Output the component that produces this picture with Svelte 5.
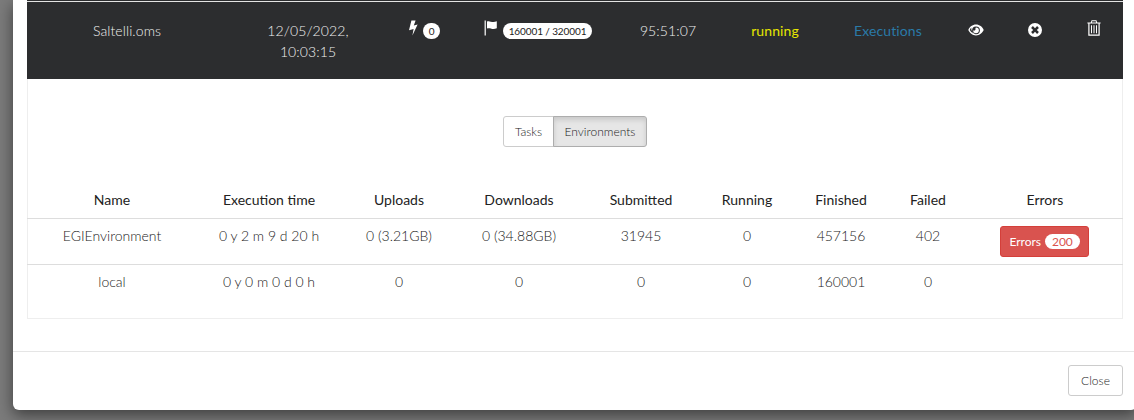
<script>
  const envHeaders = ["Name", "Execution time", "Uploads", "Downloads", "Submitted", "Running", "Finished", "Failed", "Errors"];
  const envRows = [
    { name: "EGIEnvironment", time: "0 y 2 m 9 d 20 h", up: "0 (3.21GB)", down: "0 (34.88GB)", submitted: "31945", running: "0", finished: "457156", failed: "402", errors: 200 },
    { name: "local", time: "0 y 0 m 0 d 0 h", up: "0", down: "0", submitted: "0", running: "0", finished: "160001", failed: "0", errors: 0 }
  ];
</script>

<div class="modal">
  <div class="top-edge"></div>
  <div class="panel">
    <div class="exec-row">
      <div class="cell name">Saltelli.oms</div>
      <div class="cell">12/05/2022,<br />10:03:15</div>
      <div class="cell inline">
        <svg class="bolt" viewBox="0 0 10 16"><path d="M9.6 4.6 4.4 15.6 5.6 9 1 10.2 3.4 0.6 7.6 0.6 5.8 5.6Z" /></svg>
        <span class="badge">0</span>
      </div>
      <div class="cell inline">
        <svg class="flag" viewBox="0 0 14 16"><path d="M0.6 0.5H1.8V15.5H0.6ZM3 1.6C5.5 0 8 3.4 12.8 1.2V8.2C8 10.2 5.5 7 3 8.6Z" /></svg>
        <span class="badge">160001 / 320001</span>
      </div>
      <div class="cell">95:51:07</div>
      <div class="cell running">running</div>
      <div class="cell link">Executions</div>
      <div class="cell icon">
        <svg viewBox="0 0 16 12" width="16" height="12"><path fill-rule="evenodd" d="M8 0.6C11.6 0.6 14.4 3 15.7 6 14.4 9 11.6 11.4 8 11.4 4.4 11.4 1.6 9 0.3 6 1.6 3 4.4 0.6 8 0.6ZM8 2.4A3.9 3.9 0 1 0 8 10.2 3.9 3.9 0 1 0 8 2.4ZM3.2 3.6C2.6 4.3 2.1 5.1 1.8 6 3 8.2 5 9.8 7.2 10.2 4.8 9.2 3 6.6 3.2 3.6ZM8 3.4A2.9 2.9 0 1 1 5.1 6.3C5.9 7 7.6 6.6 7.5 4.9 7.4 4.2 7.4 3.8 8 3.4Z" /></svg>
      </div>
      <div class="cell icon">
        <svg viewBox="0 0 14 14" width="14" height="14"><path fill-rule="evenodd" d="M7 0A7 7 0 1 1 7 14 7 7 0 1 1 7 0ZM4.9 3.1 3.1 4.9 5.2 7 3.1 9.1 4.9 10.9 7 8.8 9.1 10.9 10.9 9.1 8.8 7 10.9 4.9 9.1 3.1 7 5.2Z" /></svg>
      </div>
      <div class="cell icon trash">
        <svg viewBox="0 0 14 16" width="14" height="16"><path fill-rule="evenodd" d="M4.6 0.3H9.4L10.2 2.4H13.6V3.6H12.7V15.7H1.3V3.6H0.4V2.4H3.8ZM5.2 1.2 4.9 2.4H9.1L8.8 1.2ZM2.5 3.6V14.6H11.5V3.6ZM4 5.2H5V13.2H4ZM6.5 5.2H7.5V13.2H6.5ZM9 5.2H10V13.2H9Z" /></svg>
      </div>
    </div>

    <div class="toggle">
      <button class="btn first">Tasks</button>
      <button class="btn last active">Environments</button>
    </div>

    <table>
      <colgroup>
        <col style="width:170px" /><col style="width:144px" /><col style="width:116px" />
        <col style="width:124px" /><col style="width:120px" /><col style="width:92px" />
        <col style="width:96px" /><col style="width:78px" /><col style="width:156px" />
      </colgroup>
      <thead>
        <tr>
          {#each envHeaders as h}
            <th>{h}</th>
          {/each}
        </tr>
      </thead>
      <tbody>
        {#each envRows as r}
          <tr>
            <td>{r.name}</td>
            <td>{r.time}</td>
            <td>{r.up}</td>
            <td>{r.down}</td>
            <td>{r.submitted}</td>
            <td>{r.running}</td>
            <td>{r.finished}</td>
            <td>{r.failed}</td>
            <td>
              {#if r.errors}
                <button class="btn danger">Errors <span class="badge red">{r.errors}</span></button>
              {/if}
            </td>
          </tr>
        {/each}
      </tbody>
    </table>
  </div>

  <div class="footer">
    <button class="btn close">Close</button>
  </div>
</div>

<style>
  :global(body) {
    margin: 0;
    height: 420px;
    overflow: hidden;
    background: #7b7b7b;
    font-family: "Lato", "Open Sans", sans-serif;
    font-weight: 300;
  }

  .modal {
    width: 1124px;
    height: 410px;
    margin-left: 13px;
    background: #fff;
    border-radius: 0 0 6px 6px;
    box-shadow: 0 5px 15px rgba(0, 0, 0, 0.5);
    padding: 0 14px;
    box-sizing: border-box;
  }

  .top-edge {
    height: 1px;
    background: #2c2d2f;
    border-bottom: 1px solid #e4e4e4;
  }

  .panel {
    height: 317px;
    box-sizing: border-box;
    border: 1px solid #eee;
    border-top: 0;
  }

  .exec-row {
    display: grid;
    grid-template-columns: 213px 136px 98px 128px 132px 82px 144px 32px 86px 32px 13px;
    height: 77px;
    margin: 0 -1px;
    padding-top: 18px;
    box-sizing: border-box;
    background: #2c2d2f;
    color: #f0f0f0;
    font-size: 14px;
    line-height: 21px;
    text-align: center;
    letter-spacing: 0.1px;
  }

  .cell.name {
    padding-right: 13px;
  }

  .inline {
    display: flex;
    justify-content: center;
    align-items: center;
    gap: 5px;
    height: 21px;
  }

  .bolt {
    width: 10px;
    height: 16px;
    fill: #fff;
    margin-top: -5px;
    margin-left: -2px;
  }

  .flag {
    width: 14px;
    height: 16px;
    fill: #fff;
    margin-top: -5px;
  }

  .badge {
    display: inline-block;
    background: #fff;
    color: #222;
    border-radius: 10px;
    font-size: 10px;
    font-weight: 400;
    line-height: 16px;
    padding: 0 6px;
    margin-top: 1px;
    letter-spacing: -0.1px;
  }

  .running {
    color: #e6e600;
    font-weight: 400;
  }

  .link {
    color: #2a7aa8;
    font-weight: 400;
  }

  .icon {
    display: flex;
    justify-content: center;
    align-items: center;
    height: 21px;
    margin-top: -1px;
  }

  .icon svg {
    fill: #fff;
  }

  .trash {
    margin-top: -3px;
  }

  .toggle {
    display: flex;
    justify-content: center;
    margin-top: 37px;
    margin-bottom: 43px;
  }

  .btn {
    font-family: inherit;
    font-weight: 300;
    font-size: 12px;
    line-height: 18px;
    padding: 5px 10px;
    height: 31px;
    box-sizing: border-box;
    background: #fff;
    border: 1px solid #ccc;
    border-radius: 3px;
    color: #222;
  }

  .first {
    width: 51px;
    border-radius: 3px 0 0 3px;
    padding: 5px 0;
  }

  .last {
    width: 94px;
    margin-left: -1px;
    padding: 5px 0;
    border-radius: 0 3px 3px 0;
  }

  .active {
    background: #e6e6e6;
    border-color: #adadad;
    box-shadow: inset 0 3px 5px rgba(0, 0, 0, 0.125);
  }

  table {
    width: 1096px;
    margin-left: -1px;
    table-layout: fixed;
    border-collapse: collapse;
    font-size: 14px;
    line-height: 20px;
    color: #222;
    text-align: center;
  }

  th {
    font-weight: 400;
    padding: 0 0 8px;
    border-bottom: 1px solid #ddd;
    height: 20px;
  }

  td {
    padding: 7px 0 8px;
    vertical-align: top;
    height: 29px;
  }

  tbody tr:first-child td {
    border-bottom: 1px solid #ddd;
    padding-bottom: 7px;
  }

  .danger {
    width: 89px;
    padding: 0;
    margin-left: -1px;
    background: #d9534f;
    border-color: #d43f3a;
    color: #fff;
    font-weight: 400;
  }

  .red {
    background: #fff;
    color: #d9534f;
    font-size: 12px;
    line-height: 15px;
    padding: 0 7px;
    margin: 0 0 0 1px;
  }

  .footer {
    margin: 32px -14px 0;
    border-top: 1px solid #e5e5e5;
    padding: 13px 14px 0;
    display: flex;
    justify-content: flex-end;
  }

  .close {
    width: 55px;
    padding: 0;
  }
</style>
